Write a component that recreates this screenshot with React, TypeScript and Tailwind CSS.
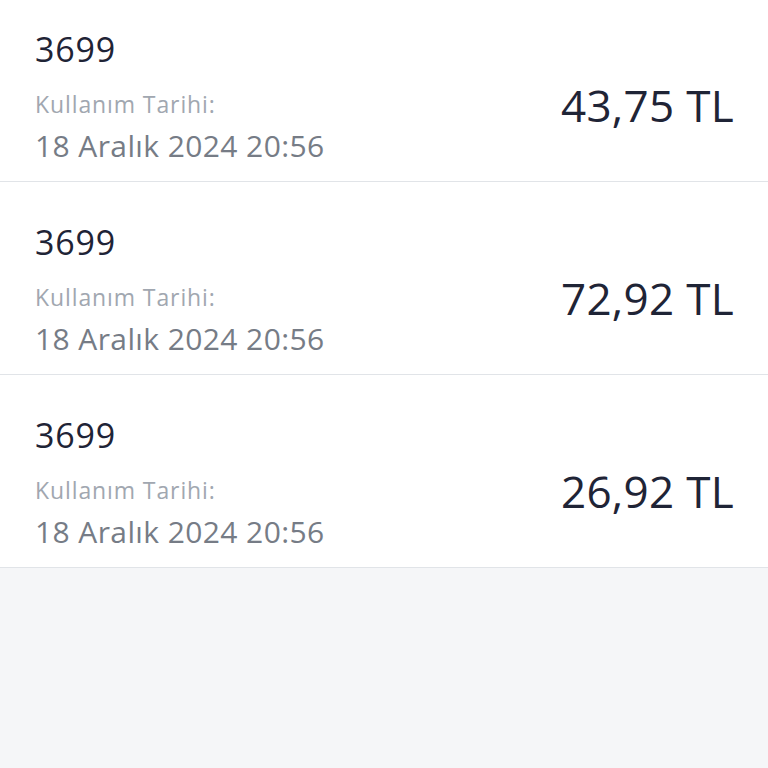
import React from "react";

const rows = [
  { code: "3699", date: "18 Aralık 2024 20:56", amount: "43,75 TL" },
  { code: "3699", date: "18 Aralık 2024 20:56", amount: "72,92 TL" },
  { code: "3699", date: "18 Aralık 2024 20:56", amount: "26,92 TL" },
];

export default function App() {
  return (
    <div
      className="w-[768px] h-[768px] overflow-hidden bg-[#f5f6f8]"
      style={{ fontFamily: "'Open Sans', 'Noto Sans', sans-serif" }}
    >
      <div className="-mt-[11px] bg-white">
        {rows.map((r, i) => (
          <div
            key={i}
            className="flex justify-between border-b border-[#e1e4e8] pl-[35px] pr-[34px] pt-[40px] pb-[17px]"
          >
            <div className="flex flex-col">
              <div className="text-[34px] leading-[40px] tracking-[0.8px] text-[#1f2436]">
                {r.code}
              </div>
              <div className="mt-[22px] text-[23px] leading-[26px] tracking-[0.9px] text-[#a1a7b0]">
                Kullanım Tarihi:
              </div>
              <div className="mt-[11px] text-[30px] leading-[36px] tracking-[0.4px] text-[#767c86]">
                {r.date}
              </div>
            </div>
            <div className="mt-[50px] self-start text-[44px] leading-[53px] tracking-[0.3px] text-[#1f2436]">
              {r.amount}
            </div>
          </div>
        ))}
      </div>
    </div>
  );
}
